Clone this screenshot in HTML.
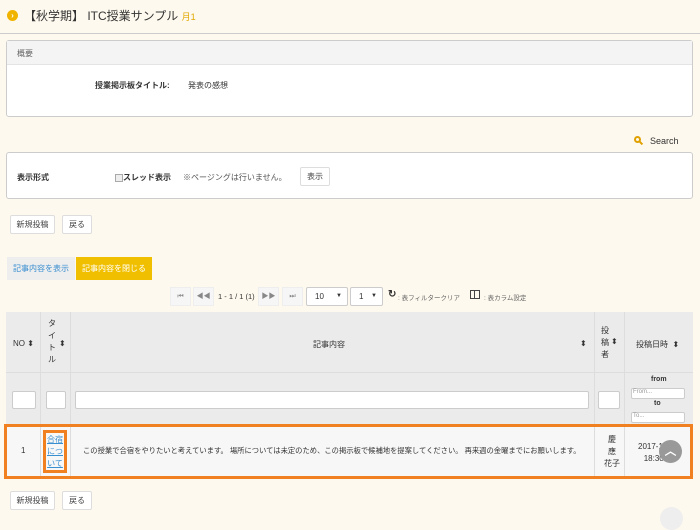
<!DOCTYPE html>
<html><head><meta charset="utf-8"><style>
*{box-sizing:border-box;margin:0;padding:0}
body{width:700px;height:519px;overflow:hidden;background:#fef9ee;font-family:"Liberation Sans","Noto Sans CJK JP",sans-serif;font-size:8px;color:#333;position:relative}
.a{position:absolute}
.box{position:absolute;left:6px;width:687px;border:1px solid #ccc;border-radius:3px;background:#fff}
.btn{position:absolute;border:1px solid #ddd;background:#fff;border-radius:2px;font-size:8px;color:#444;text-align:center;line-height:17px;height:19px}
.pb{position:absolute;top:287px;height:19px;background:#f6f6f6;border:1px solid #eee;color:#888;font-size:7px;text-align:center;line-height:17px}
.sel{position:absolute;top:287px;height:19px;border:1px solid #ccc;border-radius:2px;background:#fff;font-size:8px;line-height:17px;padding-left:8px}
.inp{position:absolute;background:#fff;border:1px solid #ccc;border-radius:2px}
.vl{position:absolute;width:1px;background:#ddd}
</style></head><body>
<div class="a" style="left:7px;top:10px;width:11px;height:11px;border-radius:50%;background:#f0b400;color:#fff;font-size:8px;line-height:11px;text-align:center;font-weight:bold">›</div>
<div class="a" style="left:24px;top:7px;font-size:12px;color:#333">【秋学期】 ITC授業サンプル <span style="font-size:9px;color:#e0a800">月1</span></div>
<div class="a" style="left:0;top:33px;width:700px;height:1px;background:#ccc"></div>

<div class="box" style="top:40px;height:77px">
<div style="height:24px;background:#f4f4f4;border-bottom:1px solid #e4e4e4;padding:7px 10px;color:#666">概要</div>
</div>
<div class="a" style="left:95px;top:80px;font-weight:bold">授業掲示板タイトル:</div>
<div class="a" style="left:188px;top:80px">発表の感想</div>

<div class="a" style="left:634px;top:136px;width:7px;height:7px;border:2px solid #e0a000;border-radius:50%"></div>
<div class="a" style="left:639px;top:142px;width:4px;height:2px;background:#e0a000;transform:rotate(45deg)"></div>
<div class="a" style="left:650px;top:136px;font-size:9px">Search</div>

<div class="box" style="top:152px;height:47px"></div>
<div class="a" style="left:17px;top:172px;font-weight:bold">表示形式</div>
<div class="a" style="left:115px;top:174px;width:8px;height:8px;border:1px solid #aaa;background:#eee"></div>
<div class="a" style="left:123px;top:172px;font-weight:bold">スレッド表示</div>
<div class="a" style="left:183px;top:172px;color:#555">※ページングは行いません。</div>
<div class="btn" style="left:300px;top:167px;width:30px">表示</div>

<div class="btn" style="left:10px;top:215px;width:45px">新規投稿</div>
<div class="btn" style="left:62px;top:215px;width:30px">戻る</div>

<div class="a" style="left:7px;top:257px;width:68px;height:23px;background:#eee;color:#3a8fd0;line-height:23px;text-align:center">記事内容を表示</div>
<div class="a" style="left:76px;top:257px;width:76px;height:23px;background:#f0c000;color:#fff;line-height:23px;text-align:center">記事内容を閉じる</div>

<div class="pb" style="left:170px;width:21px">⏮</div>
<div class="pb" style="left:193px;width:21px">◀◀</div>
<div class="a" style="left:218px;top:292px;font-size:7.5px">1 - 1 / 1 (1)</div>
<div class="pb" style="left:258px;width:21px">▶▶</div>
<div class="pb" style="left:282px;width:21px">⏭</div>
<div class="sel" style="left:306px;width:42px">10<span style="position:absolute;right:5px;font-size:6px">▼</span></div>
<div class="sel" style="left:350px;width:33px">1<span style="position:absolute;right:5px;font-size:6px">▼</span></div>
<div class="a" style="left:388px;top:289px;font-size:10px;font-weight:bold">↻</div>
<div class="a" style="left:398px;top:292px;font-size:6.5px;color:#666">: 表フィルタークリア</div>
<div class="a" style="left:470px;top:290px;width:10px;height:9px;border:1px solid #444"><div style="margin-left:3px;width:1px;height:7px;background:#444"></div></div>
<div class="a" style="left:484px;top:292px;font-size:6.5px;color:#666">: 表カラム設定</div>

<div class="a" style="left:6px;top:312px;width:687px;height:113px;background:#ebebeb"></div>
<div class="a" style="left:6px;top:372px;width:687px;height:1px;background:#ddd"></div>
<div class="vl" style="left:40px;top:312px;height:167px"></div>
<div class="vl" style="left:70px;top:312px;height:167px"></div>
<div class="vl" style="left:594px;top:312px;height:167px"></div>
<div class="vl" style="left:624px;top:312px;height:167px"></div>
<div class="a" style="left:13px;top:339px">NO ⬍</div>
<div class="a" style="left:48px;top:318px;width:10px;line-height:12px">タ<br>イ<br>ト<br>ル</div><div class="a" style="left:59px;top:339px">⬍</div>
<div class="a" style="left:313px;top:339px">記事内容</div><div class="a" style="left:580px;top:339px">⬍</div>
<div class="a" style="left:601px;top:325px;width:10px;line-height:12px">投<br>稿<br>者</div><div class="a" style="left:611px;top:337px">⬍</div>
<div class="a" style="left:636px;top:339px">投稿日時 &nbsp;⬍</div>
<div class="inp" style="left:12px;top:391px;width:24px;height:18px"></div>
<div class="inp" style="left:46px;top:391px;width:20px;height:18px"></div>
<div class="inp" style="left:75px;top:391px;width:514px;height:18px"></div>
<div class="inp" style="left:598px;top:391px;width:22px;height:18px"></div>
<div class="a" style="left:651px;top:376px;font-size:7px;font-weight:bold">from</div>
<div class="inp" style="left:631px;top:388px;width:54px;height:11px;font-size:6px;color:#999;padding-left:1px">From...</div>
<div class="a" style="left:654px;top:400px;font-size:7px;font-weight:bold">to</div>
<div class="inp" style="left:631px;top:412px;width:54px;height:11px;font-size:6px;color:#999;padding-left:1px">To...</div>

<div class="a" style="left:6px;top:426px;width:686px;height:51px;background:#f7f7f7"></div>
<div class="vl" style="left:40px;top:426px;height:51px"></div>
<div class="vl" style="left:70px;top:426px;height:51px"></div>
<div class="vl" style="left:594px;top:426px;height:51px"></div>
<div class="vl" style="left:624px;top:426px;height:51px"></div>
<div class="a" style="left:21px;top:446px">1</div>
<div class="a" style="left:43px;top:430px;width:24px;height:43px;border:3px solid #f08020;color:#3a8fd0;text-decoration:underline;line-height:12px;text-align:center;padding-top:1px">合宿<br>につ<br>いて</div>
<div class="a" style="left:83px;top:446px;width:500px;white-space:nowrap;overflow:hidden;font-size:7.3px">この授業で合宿をやりたいと考えています。 場所については未定のため、この掲示板で候補地を提案してください。 再来週の金曜までにお願いします。</div>
<div class="a" style="left:602px;top:434px;width:20px;line-height:12px;text-align:center">慶<br>應<br>花子</div>
<div class="a" style="left:638px;top:441px;line-height:12px;text-align:center">2017-11-<br>18:30</div>
<div class="a" style="left:4px;top:424px;width:689px;height:55px;border:3px solid #f08020"></div>
<div class="a" style="left:659px;top:440px;width:23px;height:23px;border-radius:50%;background:#999;color:#fff;text-align:center;line-height:23px;font-size:12px;font-weight:bold">︿</div>

<div class="btn" style="left:10px;top:491px;width:45px">新規投稿</div>
<div class="btn" style="left:62px;top:491px;width:30px">戻る</div>
<div class="a" style="left:660px;top:507px;width:23px;height:23px;border-radius:50%;background:#eee"></div>
</body></html>
